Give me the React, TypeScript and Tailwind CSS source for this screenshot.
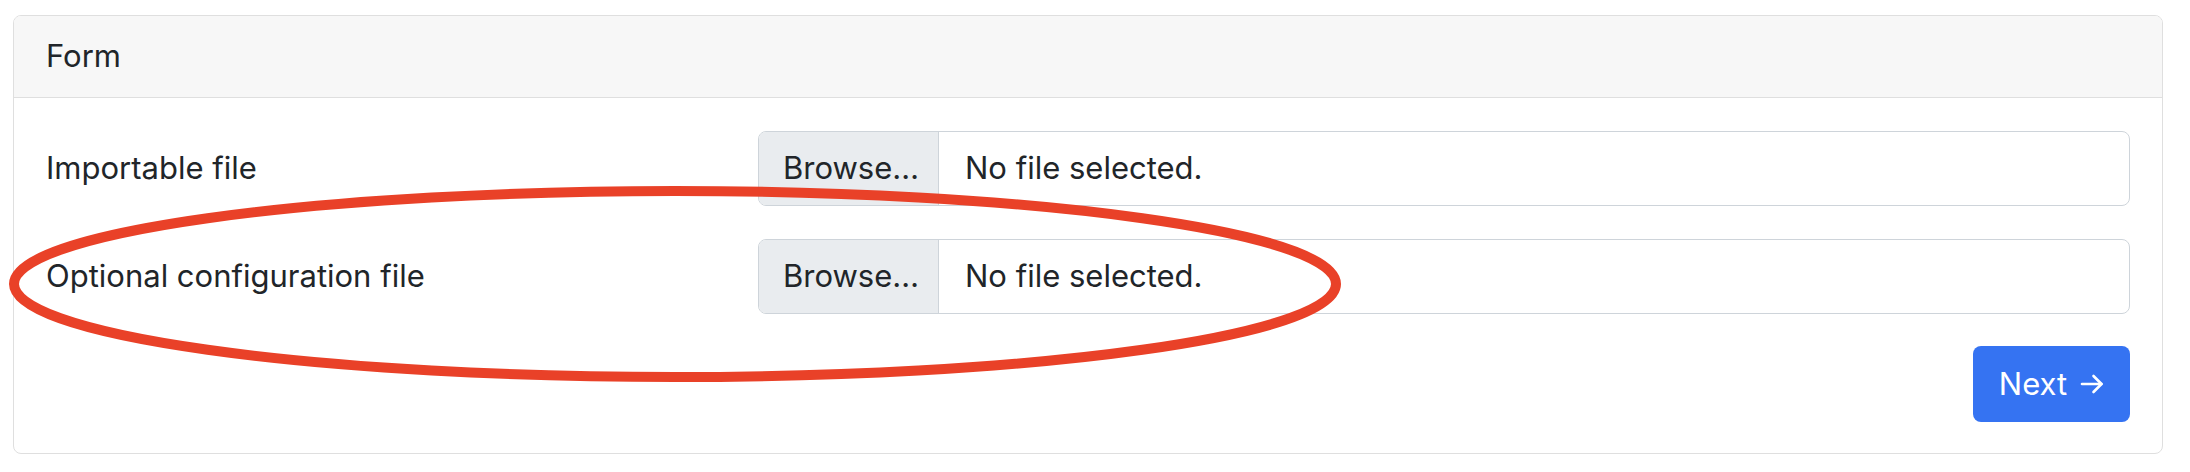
import React from "react";

const font = { fontFamily: "Inter, 'Liberation Sans', Arial, sans-serif" };

function FileInput() {
  return (
    <div className="flex h-[75px] flex-1 items-stretch overflow-hidden rounded-[8px] border border-[#ced4da] bg-white">
      <div className="flex w-[180px] items-center border-r border-[#ced4da] bg-[#e9ecef] pl-[24px]">
        <span>Browse…</span>
      </div>
      <div className="flex items-center pl-[26px]">
        <span>No file selected.</span>
      </div>
    </div>
  );
}

export default function App() {
  return (
    <div
      className="relative h-[472px] w-[2190px] overflow-hidden bg-white text-[31px] leading-[1.5] text-[#212529]"
      style={font}
    >
      <div className="pl-[13px] pt-[15px]">
        <div className="w-[2150px] overflow-hidden rounded-[8px] border border-[#dfdfdf] bg-white">
          <div className="flex h-[82px] items-center border-b border-[#dfdfdf] bg-[#f7f7f7] px-[32px]">
            <span>Form</span>
          </div>
          <div className="flex flex-col px-[32px] pb-[31px] pt-[33px]">
            <div className="flex items-center">
              <div className="w-[712px]">Importable file</div>
              <FileInput />
            </div>
            <div className="mt-[33px] flex items-center">
              <div className="w-[712px]">Optional configuration file</div>
              <FileInput />
            </div>
            <div className="mt-[32px] flex justify-end">
              <button className="flex h-[76px] w-[157px] items-center justify-center rounded-[8px] bg-[#3573f2] text-white">
                <span>Next</span>
                <svg
                  className="ml-[13px]"
                  width="24"
                  height="20"
                  viewBox="0 0 24 20"
                  fill="none"
                  stroke="white"
                  strokeWidth="2.6"
                  strokeLinecap="round"
                  strokeLinejoin="round"
                >
                  <path d="M2 10 H21.5" />
                  <path d="M13.5 2 L21.5 10 L13.5 18" />
                </svg>
              </button>
            </div>
          </div>
        </div>
      </div>
      <svg
        className="pointer-events-none absolute left-0 top-0"
        width="2190"
        height="472"
        viewBox="0 0 2190 472"
      >
        <ellipse cx="675" cy="284" rx="661" ry="93" fill="none" stroke="#e94128" strokeWidth="10" />
      </svg>
    </div>
  );
}
